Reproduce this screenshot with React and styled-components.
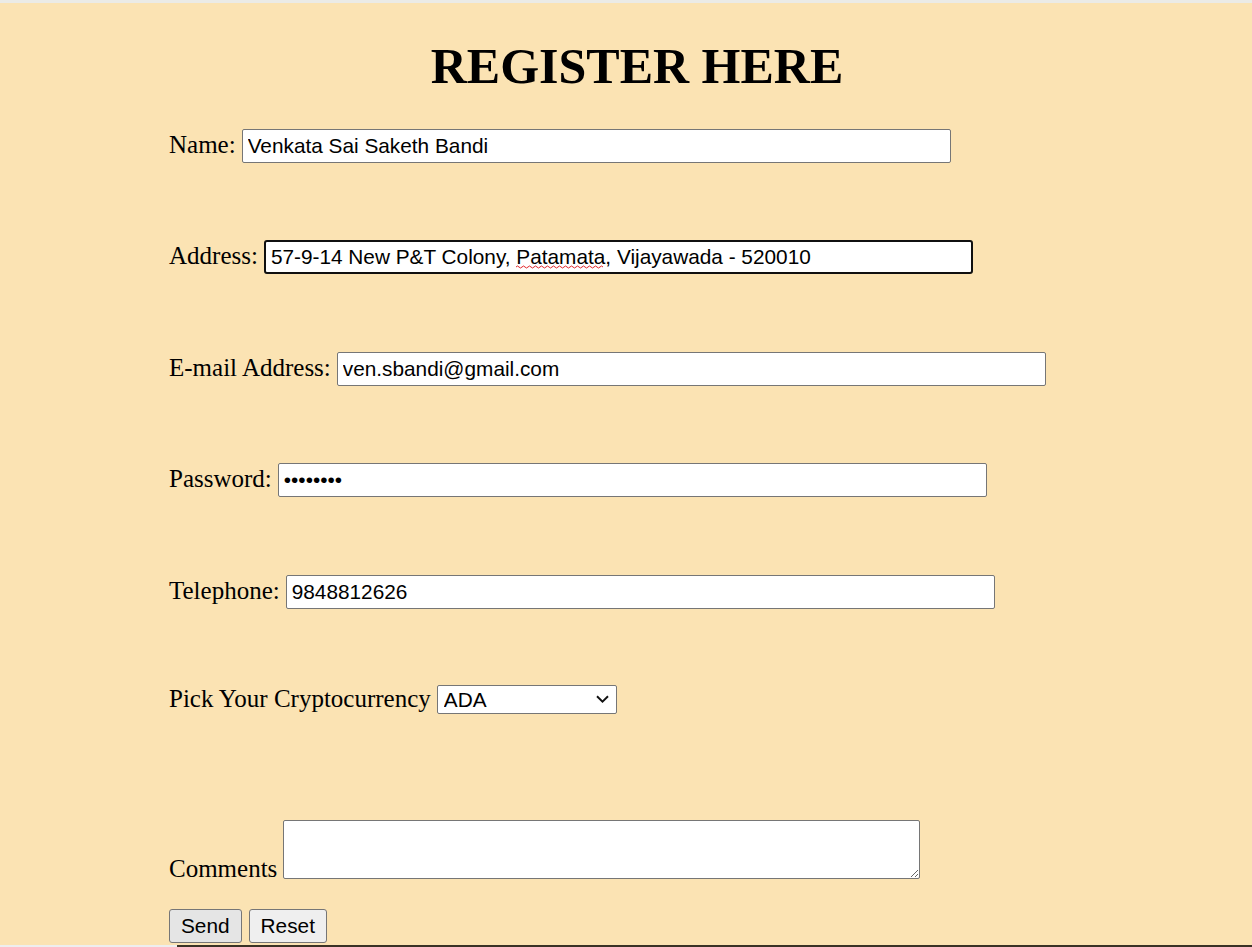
import React from "react";
import styled, { createGlobalStyle } from "styled-components";

const GlobalStyle = createGlobalStyle`
  html, body {
    margin: 0;
    padding: 0;
    background: #fbe3b3;
  }
  body {
    font-family: "Liberation Serif", "Times New Roman", serif;
    color: #000;
  }
`;

const Page = styled.div`
  display: flex;
  flex-direction: column;
  height: 947px;
  overflow: hidden;
`;

const TopEdge = styled.div`
  height: 3px;
  background: #ebebe6;
`;

const Main = styled.main`
  flex: 1;
  padding-left: 169px;
`;

const BottomEdge = styled.div`
  display: flex;
  height: 2px;
`;

const EdgePart = styled.div`
  width: ${(p) => p.$width || "auto"};
  flex: ${(p) => (p.$width ? "none" : 1)};
  background: ${(p) => p.$color};
`;

const Form = styled.form`
  display: flex;
  flex-direction: column;
  width: 936px;
`;

const Title = styled.h1`
  margin: 0;
  padding-top: 33px;
  font-size: 50px;
  line-height: 60px;
  font-weight: bold;
  text-align: center;
`;

const Row = styled.div`
  display: flex;
  align-items: ${(p) => (p.$end ? "flex-end" : "baseline")};
  gap: 6px;
  margin-top: ${(p) => p.$top}px;
`;

const Label = styled.label`
  font-size: 25px;
  white-space: nowrap;
  line-height: ${(p) => (p.$end ? 1 : "normal")};
  margin-bottom: ${(p) => (p.$end ? "-2px" : 0)};
`;

const Field = styled.div`
  position: relative;
  display: flex;
`;

const TextInput = styled.input`
  box-sizing: border-box;
  width: 709px;
  height: 34px;
  padding: 0 5px;
  border: ${(p) => (p.$focused ? "2px solid #101010" : "1px solid #767676")};
  border-radius: ${(p) => (p.$focused ? "3px" : "2px")};
  background: #fff;
  color: #000;
  font-family: "Liberation Sans", Arial, sans-serif;
  font-size: 20.8px;
  outline: none;
`;

const Squiggle = styled.svg`
  position: absolute;
  left: 252px;
  top: 25px;
  pointer-events: none;
`;

const Select = styled.select`
  appearance: none;
  box-sizing: border-box;
  width: 180px;
  height: 29px;
  padding: 0 26px 0 6px;
  border: 1px solid #767676;
  border-radius: 2px;
  background: #fff;
  color: #000;
  font-family: "Liberation Sans", Arial, sans-serif;
  font-size: 20.8px;
`;

const Chevron = styled.svg`
  position: absolute;
  right: 8px;
  top: 10px;
  pointer-events: none;
`;

const TextArea = styled.textarea`
  box-sizing: border-box;
  width: 637px;
  height: 59px;
  margin: 0;
  border: 1px solid #767676;
  border-radius: 2px;
  background: #fff;
  font-family: "Liberation Mono", monospace;
  font-size: 20px;
`;

const Buttons = styled.div`
  display: flex;
  gap: 7px;
  margin-top: 30px;
`;

const Button = styled.button`
  box-sizing: border-box;
  height: 34px;
  padding: 0 11px;
  border: 1px solid #767676;
  border-radius: 3px;
  background: ${(p) => (p.$pressed ? "#e5e5e5" : "#efefef")};
  color: #000;
  font-family: "Liberation Sans", Arial, sans-serif;
  font-size: 20.8px;
`;

const wave = "M0 2 Q1.5 0 3 2 T6 2 T9 2 T12 2 T15 2 T18 2 T21 2 T24 2 T27 2 T30 2 T33 2 T36 2 T39 2 T42 2 T45 2 T48 2 T51 2 T54 2 T57 2 T60 2 T63 2 T66 2 T69 2 T72 2 T75 2 T78 2 T81 2 T84 2 T87 2";

const fields = [
  { label: "Name:", type: "text", value: "Venkata Sai Saketh Bandi", top: 33 },
  { label: "Address:", type: "text", value: "57-9-14 New P&T Colony, Patamata, Vijayawada - 520010", top: 77, focused: true },
  { label: "E-mail Address:", type: "email", value: "ven.sbandi@gmail.com", top: 78 },
  { label: "Password:", type: "password", value: "saketh12", top: 77 },
  { label: "Telephone:", type: "tel", value: "9848812626", top: 78 },
];

const coins = ["ADA", "BTC", "ETH", "XRP", "SOL", "DOGE"];

export default () => {
  return (
    <Page>
      <GlobalStyle />
      <TopEdge />
      <Main>
        <Form onSubmit={(e) => e.preventDefault()}>
          <Title>REGISTER HERE</Title>

          {fields.map((item) => (
            <Row key={item.label} $top={item.top}>
              <Label>{item.label}</Label>
              <Field>
                <TextInput type={item.type} defaultValue={item.value} $focused={item.focused} spellCheck={false} />
                {item.focused && (
                  <Squiggle width="88" height="4" viewBox="0 0 88 4">
                    <path d={wave} fill="none" stroke="#e0262b" strokeWidth="1" />
                  </Squiggle>
                )}
              </Field>
            </Row>
          ))}

          <Row $top={76}>
            <Label>Pick Your Cryptocurrency</Label>
            <Field>
              <Select defaultValue="ADA">
                {coins.map((c) => (
                  <option key={c}>{c}</option>
                ))}
              </Select>
              <Chevron width="13" height="8" viewBox="0 0 13 8">
                <path d="M1 1.2 L6.5 6.6 L12 1.2" fill="none" stroke="#111" strokeWidth="1.9" />
              </Chevron>
            </Field>
          </Row>

          <Row $top={106} $end>
            <Label $end>Comments</Label>
            <TextArea />
          </Row>

          <Buttons>
            <Button type="submit" $pressed>Send</Button>
            <Button type="reset">Reset</Button>
          </Buttons>
        </Form>
      </Main>
      <BottomEdge>
        <EdgePart $width="177px" $color="#eeeeee" />
        <EdgePart $color="#3a3225" />
      </BottomEdge>
    </Page>
  );
};
